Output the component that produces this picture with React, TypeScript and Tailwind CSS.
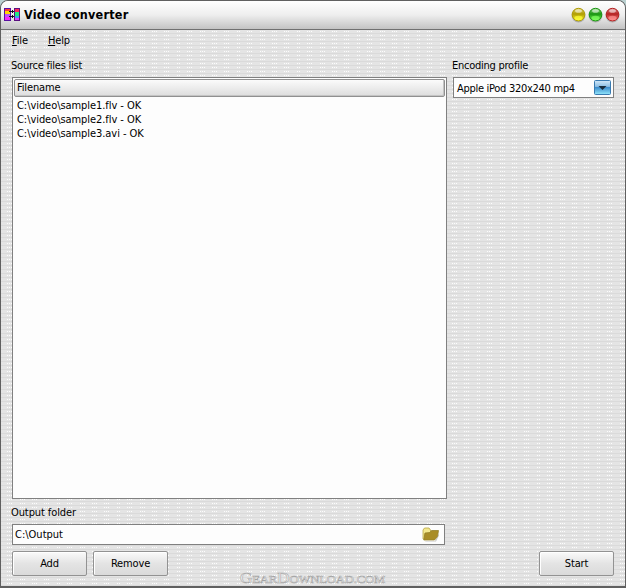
import React from "react";

function Orb({ id, dark, mid, light }: { id: string; dark: string; mid: string; light: string }) {
  return (
    <svg width="15" height="16" viewBox="0 0 15 16">
      <defs>
        <linearGradient id={id} x1="0" y1="0" x2="0" y2="1">
          <stop offset="0" stopColor={mid} />
          <stop offset="0.45" stopColor={dark} />
          <stop offset="1" stopColor={light} />
        </linearGradient>
      </defs>
      <ellipse cx="7.5" cy="8.4" rx="7" ry="7.2" fill="#00000035" />
      <circle cx="7.5" cy="7.6" r="6.3" fill={`url(#${id})`} stroke={dark} strokeWidth="1" />
      <ellipse cx="7.5" cy="4" rx="3.4" ry="1.8" fill="#ffffff" opacity="0.55" />
      <ellipse cx="7.5" cy="11" rx="4" ry="2.2" fill={light} opacity="0.7" />
    </svg>
  );
}

function AppIcon() {
  return (
    <svg width="16" height="14" viewBox="0 0 16 14" shapeRendering="crispEdges">
      <rect width="7" height="13" fill="#5a10a0" />
      <rect x="10" width="6" height="13" fill="#5a1080" />
      <rect x="1" y="1" width="5" height="2" fill="#f83838" />
      <rect x="1" y="3" width="5" height="3" fill="#ffd800" />
      <rect x="1" y="6" width="5" height="3" fill="#c050f8" />
      <rect x="1" y="9" width="5" height="3" fill="#f828f8" />
      <rect x="11" y="1" width="4" height="3" fill="#f82858" />
      <rect x="11" y="4" width="4" height="4" fill="#20e880" />
      <rect x="11" y="8" width="4" height="2" fill="#40a0f8" />
      <rect x="11" y="10" width="4" height="2" fill="#e040f8" />
      <path d="M5 3h5v1H5zM8 2h1v3H8zM5 8h5v1H5zM8 7h1v3H8z" fill="#101018" />
    </svg>
  );
}

function FolderIcon() {
  return (
    <svg width="18" height="15" viewBox="0 0 18 15">
      <path d="M2.5 14h10.5l4-7.5v2l-3 6H4z" fill="#c8c8c8" />
      <path d="M1 3 2.5 1H7l1.5 2v3.5H3v6L1 12z" fill="#f3e88e" stroke="#b8a644" strokeWidth="0.8" />
      <path d="M3 6 8 5.5l1.5-2h7L15.5 9.5l-3 3.5H1.8z" fill="#a98d27" stroke="#94802a" strokeWidth="0.8" />
    </svg>
  );
}

function PushButton({ children }: { children: React.ReactNode }) {
  return (
    <button className="h-[25px] w-[75px] rounded-[2px] border border-[#929292] bg-linear-to-b from-[#fafafa] via-[#e4e4e4] via-50% to-[#dadada] pt-px text-center leading-[22px] shadow-[inset_1px_1px_0_#fff]">
      {children}
    </button>
  );
}

export default function App() {
  return (
    <div className="h-[588px] w-[626px] bg-[#b9d0d0]">
      <div className="relative flex h-[588px] w-[626px] flex-col overflow-hidden rounded-t-[8px] border border-b-2 border-[#606060] bg-[#e4e4e4] font-['DejaVu_Sans_Condensed','DejaVu_Sans',sans-serif] text-[11px] leading-[14px] tracking-[-0.15px] text-black">
        <svg className="absolute inset-0" width="624" height="585" shapeRendering="crispEdges">
          <defs>
            <pattern id="weave" width="60" height="4" patternUnits="userSpaceOnUse">
              <path d="M0 0h60v1H0z" fill="#dadada" />
              <path
                d="M6 2.5h1m1 0h1m1 0h1M19 2.5h1m1 0h1m1 0h1M31 2.5h1m1 0h1m1 0h1M43 2.5h1m1 0h1m1 0h1M56 2.5h1m1 0h1"
                stroke="#fdfdfd"
                strokeWidth="1"
              />
            </pattern>
          </defs>
          <rect y="29" width="624" height="556" fill="url(#weave)" />
        </svg>
        <header className="relative flex h-[29px] shrink-0 items-center border-b border-[#707070] bg-linear-to-b from-white via-[#eeeeee] via-50% to-[#c3c3c3] pr-[5px] pl-[3px]">
          <AppIcon />
          <h1 className="ml-[4px] flex-1 text-[12.5px] font-bold tracking-[0.22px]">Video converter</h1>
          <div className="mb-px flex gap-[2px]">
            <Orb id="yellow" dark="#b09c00" mid="#e0d478" light="#ffff38" />
            <Orb id="green" dark="#189410" mid="#a0e090" light="#80ff60" />
            <Orb id="red" dark="#b52020" mid="#e09090" light="#ff9090" />
          </div>
        </header>
        <nav className="relative flex h-[22px] shrink-0 items-center gap-[20px] pl-[11px]">
          <span><u>F</u>ile</span>
          <span><u>H</u>elp</span>
        </nav>
        <main className="relative flex gap-[5px] pt-[7px] pl-[11px]">
          <section className="w-[435px]">
            <h2 className="-ml-px tracking-[-0.23px]">Source files list</h2>
            <div className="mt-[4px] h-[422px] border border-[#808080] bg-[#fdfdfd] p-px">
              <div className="h-[18px] rounded-[2px] border border-[#909090] bg-linear-to-b from-[#fbfbfb] to-[#dddddd] pl-[2px] leading-[15px] shadow-[inset_-1px_-1px_0_#c4c4c4]">Filename</div>
              <ul className="pt-[2px] pl-[3px] tracking-[-0.06px]">
                <li>C:\video\sample1.flv - OK</li>
                <li>C:\video\sample2.flv - OK</li>
                <li>C:\video\sample3.avi - OK</li>
              </ul>
            </div>
            <h2 className="mt-[7px] -ml-px tracking-[-0.1px]">Output folder</h2>
            <div className="mt-[4px] flex h-[21px] w-[433px] items-center justify-between border border-[#808080] bg-[#fdfdfd] pr-[4px] pl-[2px]">
              <span className="tracking-normal">C:\Output</span>
              <FolderIcon />
            </div>
          </section>
          <section className="w-[162px]">
            <h2 className="tracking-[-0.25px]">Encoding profile</h2>
            <div className="mt-[4px] ml-px flex h-[21px] w-[161px] items-center justify-between border border-[#808080] bg-[#fdfdfd] pr-[2px] pl-[3px]">
              <span className="pt-[2px] tracking-[-0.29px]">Apple iPod 320x240 mp4</span>
              <svg width="17" height="15" viewBox="0 0 17 15">
                <defs>
                  <linearGradient id="drop" x1="0" y1="0" x2="0" y2="1">
                    <stop offset="0" stopColor="#d3e8f8" />
                    <stop offset="0.42" stopColor="#8fc0e5" />
                    <stop offset="0.5" stopColor="#3e8dcc" />
                    <stop offset="1" stopColor="#92e7fc" />
                  </linearGradient>
                </defs>
                <rect x="0.5" y="0.5" width="16" height="14" rx="1" fill="url(#drop)" stroke="#397ab0" />
                <path d="M4.5 6h8l-4 4z" fill="#182c3c" />
              </svg>
            </div>
          </section>
        </main>
        <footer className="relative flex justify-between pt-[6px] pr-[11px] pl-[11px]">
          <div className="flex gap-[6px]">
            <PushButton>Add</PushButton>
            <PushButton>Remove</PushButton>
          </div>
          <PushButton>Start</PushButton>
        </footer>
        <svg className="absolute bottom-0 left-[236px]" width="152" height="16">
          <text x="3" y="13" fontFamily="Liberation Serif, serif" fontSize="15" fill="#f4f4f4" stroke="#a4a4a4" strokeWidth="0.5" textLength="145" lengthAdjust="spacingAndGlyphs">G<tspan fontSize="11">EAR</tspan>D<tspan fontSize="11">OWNLOAD.COM</tspan></text>
        </svg>
      </div>
    </div>
  );
}
